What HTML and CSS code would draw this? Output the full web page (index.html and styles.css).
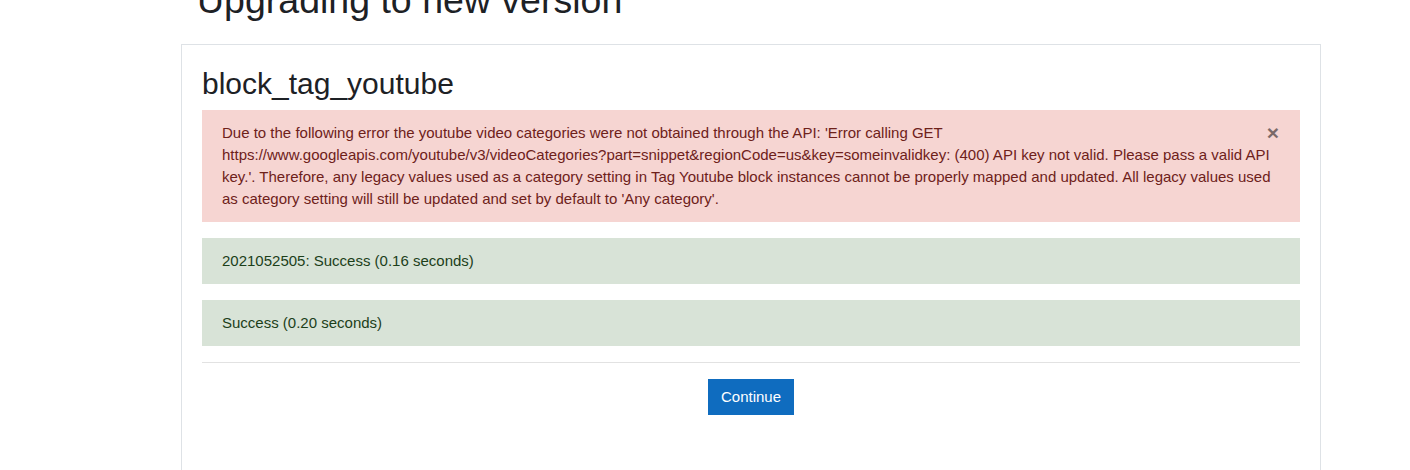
FILE: index.html
```html
<!DOCTYPE html>
<html>
<head>
<meta charset="utf-8">
<link rel="stylesheet" href="styles.css">
</head>
<body>
<div class="page">
  <h2 class="page-title">Upgrading to new version</h2>
  <div class="box">
    <h2 class="plugin-title">block_tag_youtube</h2>
    <div class="alert alert-danger">
      <button class="close" type="button" aria-label="Close">×</button>
      Due to the following error the youtube video categories were not obtained through the API: 'Error calling GET https://www.googleapis.com/youtube/v3/videoCategories?part=snippet&amp;regionCode=us&amp;key=someinvalidkey: (400) API key not valid. Please pass a valid API key.'. Therefore, any legacy values used as a category setting in Tag Youtube block instances cannot be properly mapped and updated. All legacy values used as category setting will still be updated and set by default to 'Any category'.
    </div>
    <div class="alert alert-success">2021052505: Success (0.16 seconds)</div>
    <div class="alert alert-success">Success (0.20 seconds)</div>
    <hr class="sep">
    <div class="actions">
      <button class="btn" type="button">Continue</button>
    </div>
  </div>
</div>
</body>
</html>
```

FILE: styles.css
```css
html, body {
  margin: 0;
  padding: 0;
  background: #fff;
}
body {
  font-family: "Liberation Sans", Arial, sans-serif;
  font-size: 15px;
  color: #1d2125;
  overflow: hidden;
}
.page {
  margin-left: 181px;
  width: 1140px;
}
.page-title {
  font-weight: 400;
  font-size: 37.5px;
  line-height: 45px;
  margin: -22px 0 0 16px;
  height: 66px;
  color: #1d2125;
}
.box {
  border: 1px solid #dee2e6;
  border-bottom: none;
  padding: 21px 20px 60px;
}
.plugin-title {
  font-weight: 400;
  font-size: 30px;
  line-height: 36px;
  margin: 0 0 8px;
  color: #1d2125;
}
.alert {
  position: relative;
  padding: 12px 20px;
  margin-bottom: 16px;
  line-height: 22px;
}
.alert-danger {
  background: #f6d5d2;
  color: #6e211a;
}
.alert-success {
  background: #d8e3d7;
  color: #1c3f1a;
}
.close {
  position: absolute;
  top: 0;
  right: 0;
  padding: 12px 21px;
  border: 0;
  background: transparent;
  font-family: "Liberation Sans", Arial, sans-serif;
  font-size: 21px;
  font-weight: 700;
  line-height: 22px;
  color: #000;
  opacity: .5;
}
.sep {
  border: 0;
  border-top: 1px solid #e2e2e2;
  margin: 16px 0;
}
.actions {
  display: flex;
  justify-content: center;
}
.btn {
  background: #0f6cbf;
  color: #fff;
  border: 1px solid #0f6cbf;
  font-family: "Liberation Sans", Arial, sans-serif;
  font-size: 15px;
  line-height: 22px;
  padding: 6px 12px;
  border-radius: 0;
}
```
